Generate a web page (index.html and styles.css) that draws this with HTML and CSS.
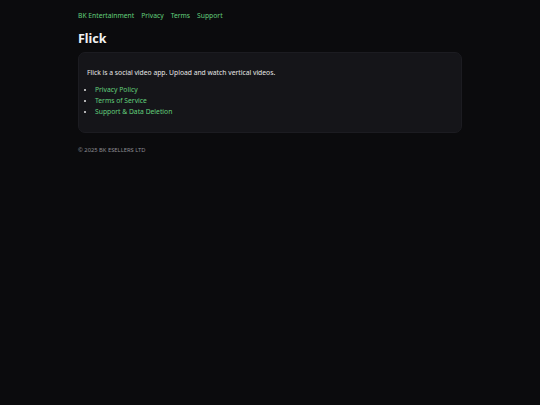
FILE: index.html
```
<!DOCTYPE html>
<html lang="en">
<head>
<meta charset="utf-8">
<title>Flick</title>
<link rel="stylesheet" href="styles.css">
</head>
<body>
<div class="wrap">
  <nav class="nav">
    <a href="#">BK Entertainment</a>
    <a href="#">Privacy</a>
    <a href="#">Terms</a>
    <a href="#">Support</a>
  </nav>
  <h1 class="title">Flick</h1>
  <section class="card">
    <p class="lead">Flick is a social video app. Upload and watch vertical videos.</p>
    <ul class="links">
      <li><a href="#">Privacy Policy</a></li>
      <li><a href="#">Terms of Service</a></li>
      <li><a href="#">Support &amp; Data Deletion</a></li>
    </ul>
  </section>
  <footer class="foot">© 2025 BK ESELLERS LTD</footer>
</div>
</body>
</html>
```
FILE: styles.css
```
html, body {
  margin: 0;
  padding: 0;
  background: #0b0b0d;
  height: 100%;
}
body {
  font-family: "Noto Sans", "Open Sans", sans-serif;
  color: #e6e6e6;
  font-size: 6.75px;
  line-height: 1.5;
}
a {
  color: #62cf7b;
  text-decoration: none;
}
.wrap {
  max-width: 384px;
  margin: 0 auto;
  padding-top: 10px;
}
.nav {
  display: flex;
  gap: 7px;
  line-height: 12px;
}
.title {
  margin: 7px 0 0;
  font-size: 12.5px;
  line-height: 20px;
  font-weight: 700;
  color: #f2f2f2;
}
.card {
  margin-top: 3px;
  background: #151519;
  border: 1px solid #1c1c21;
  border-radius: 7px;
  padding: 14px 8px 15px;
}
.lead {
  margin: 0 0 5px;
  line-height: 12px;
}
.links {
  margin: 0;
  padding-left: 8px;
  line-height: 11px;
}
.foot {
  margin-top: 13px;
  font-size: 5.8px;
  color: #8d8d92;
}
```
